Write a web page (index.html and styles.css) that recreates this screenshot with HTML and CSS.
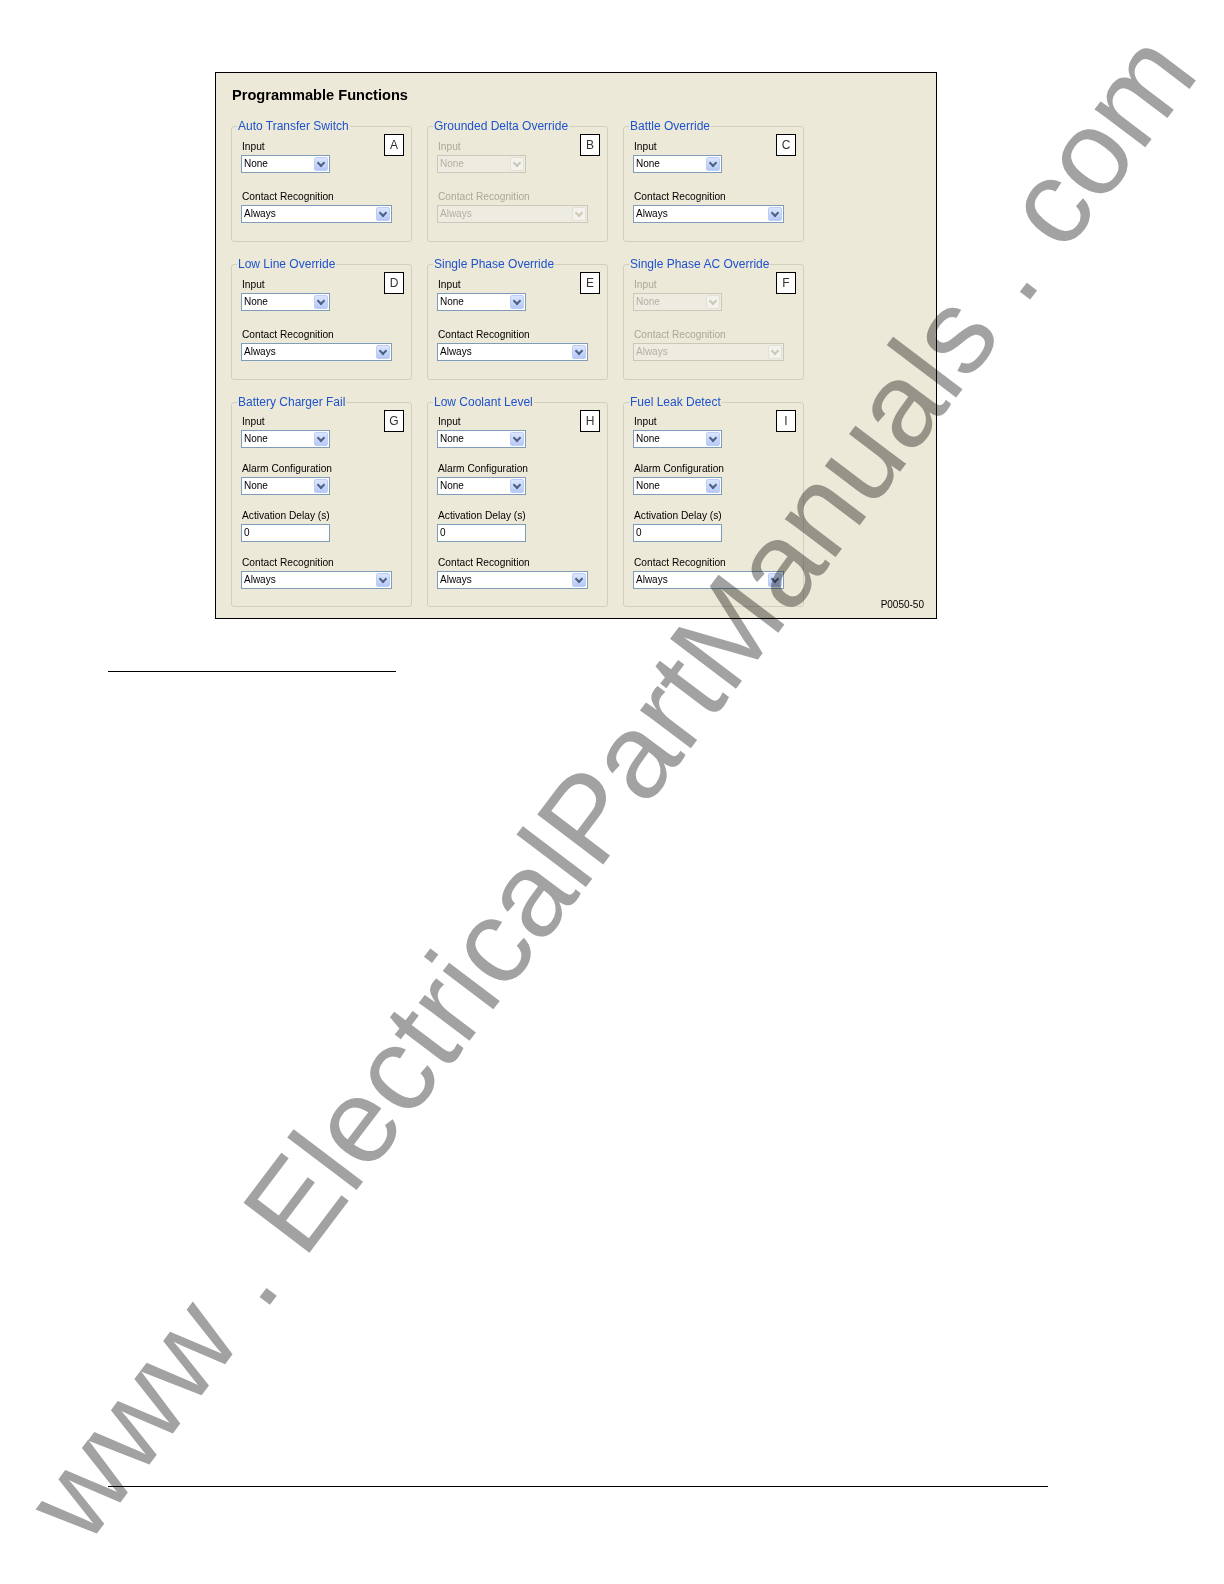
FILE: index.html
```html
<!DOCTYPE html>
<html lang="en">
<head>
<meta charset="utf-8">
<title>Programmable Functions</title>
<link rel="stylesheet" href="styles.css">
</head>
<body>
<div class="page">
  <div class="panel">
    <h1 class="panel-title">Programmable Functions</h1>
    <div class="groups">

      <fieldset class="group">
        <legend>Auto Transfer Switch</legend>
        <div class="gbody">
          <div class="fields">
            <div class="field">
              <div class="label">Input</div>
              <div class="combo short"><span class="val">None</span><span class="btn"></span></div>
            </div>
            <div class="field">
              <div class="label">Contact Recognition</div>
              <div class="combo long"><span class="val">Always</span><span class="btn"></span></div>
            </div>
          </div>
          <div class="letter">A</div>
        </div>
      </fieldset>

      <fieldset class="group off">
        <legend>Grounded Delta Override</legend>
        <div class="gbody">
          <div class="fields">
            <div class="field">
              <div class="label">Input</div>
              <div class="combo short"><span class="val">None</span><span class="btn"></span></div>
            </div>
            <div class="field">
              <div class="label">Contact Recognition</div>
              <div class="combo long"><span class="val">Always</span><span class="btn"></span></div>
            </div>
          </div>
          <div class="letter">B</div>
        </div>
      </fieldset>

      <fieldset class="group">
        <legend>Battle Override</legend>
        <div class="gbody">
          <div class="fields">
            <div class="field">
              <div class="label">Input</div>
              <div class="combo short"><span class="val">None</span><span class="btn"></span></div>
            </div>
            <div class="field">
              <div class="label">Contact Recognition</div>
              <div class="combo long"><span class="val">Always</span><span class="btn"></span></div>
            </div>
          </div>
          <div class="letter">C</div>
        </div>
      </fieldset>

      <fieldset class="group">
        <legend>Low Line Override</legend>
        <div class="gbody">
          <div class="fields">
            <div class="field">
              <div class="label">Input</div>
              <div class="combo short"><span class="val">None</span><span class="btn"></span></div>
            </div>
            <div class="field">
              <div class="label">Contact Recognition</div>
              <div class="combo long"><span class="val">Always</span><span class="btn"></span></div>
            </div>
          </div>
          <div class="letter">D</div>
        </div>
      </fieldset>

      <fieldset class="group">
        <legend>Single Phase Override</legend>
        <div class="gbody">
          <div class="fields">
            <div class="field">
              <div class="label">Input</div>
              <div class="combo short"><span class="val">None</span><span class="btn"></span></div>
            </div>
            <div class="field">
              <div class="label">Contact Recognition</div>
              <div class="combo long"><span class="val">Always</span><span class="btn"></span></div>
            </div>
          </div>
          <div class="letter">E</div>
        </div>
      </fieldset>

      <fieldset class="group off">
        <legend>Single Phase AC Override</legend>
        <div class="gbody">
          <div class="fields">
            <div class="field">
              <div class="label">Input</div>
              <div class="combo short"><span class="val">None</span><span class="btn"></span></div>
            </div>
            <div class="field">
              <div class="label">Contact Recognition</div>
              <div class="combo long"><span class="val">Always</span><span class="btn"></span></div>
            </div>
          </div>
          <div class="letter">F</div>
        </div>
      </fieldset>

      <fieldset class="group tall">
        <legend>Battery Charger Fail</legend>
        <div class="gbody">
          <div class="fields">
            <div class="field">
              <div class="label">Input</div>
              <div class="combo short"><span class="val">None</span><span class="btn"></span></div>
            </div>
            <div class="field">
              <div class="label">Alarm Configuration</div>
              <div class="combo short"><span class="val">None</span><span class="btn"></span></div>
            </div>
            <div class="field">
              <div class="label">Activation Delay (s)</div>
              <div class="textbox">0</div>
            </div>
            <div class="field">
              <div class="label">Contact Recognition</div>
              <div class="combo long"><span class="val">Always</span><span class="btn"></span></div>
            </div>
          </div>
          <div class="letter">G</div>
        </div>
      </fieldset>

      <fieldset class="group tall">
        <legend>Low Coolant Level</legend>
        <div class="gbody">
          <div class="fields">
            <div class="field">
              <div class="label">Input</div>
              <div class="combo short"><span class="val">None</span><span class="btn"></span></div>
            </div>
            <div class="field">
              <div class="label">Alarm Configuration</div>
              <div class="combo short"><span class="val">None</span><span class="btn"></span></div>
            </div>
            <div class="field">
              <div class="label">Activation Delay (s)</div>
              <div class="textbox">0</div>
            </div>
            <div class="field">
              <div class="label">Contact Recognition</div>
              <div class="combo long"><span class="val">Always</span><span class="btn"></span></div>
            </div>
          </div>
          <div class="letter">H</div>
        </div>
      </fieldset>

      <fieldset class="group tall">
        <legend>Fuel Leak Detect</legend>
        <div class="gbody">
          <div class="fields">
            <div class="field">
              <div class="label">Input</div>
              <div class="combo short"><span class="val">None</span><span class="btn"></span></div>
            </div>
            <div class="field">
              <div class="label">Alarm Configuration</div>
              <div class="combo short"><span class="val">None</span><span class="btn"></span></div>
            </div>
            <div class="field">
              <div class="label">Activation Delay (s)</div>
              <div class="textbox">0</div>
            </div>
            <div class="field">
              <div class="label">Contact Recognition</div>
              <div class="combo long"><span class="val">Always</span><span class="btn"></span></div>
            </div>
          </div>
          <div class="letter">I</div>
        </div>
      </fieldset>

      <div class="figid">P0050-50</div>
    </div>
  </div>

  <div class="rule-short"></div>
  <div class="rule-bottom"></div>

  <div class="watermark">www . ElectricalPartManuals . com</div>
</div>
</body>
</html>
```

FILE: styles.css
```css
* {
  box-sizing: border-box;
}

html,
body {
  margin: 0;
  padding: 0;
  background: #ffffff;
}

body {
  font-family: "Liberation Sans", Arial, sans-serif;
  color: #000000;
}

.page {
  position: relative;
  width: 1224px;
  height: 1584px;
  padding: 72px 0 0 108px;
  display: flex;
  flex-direction: column;
  align-items: flex-start;
  overflow: hidden;
}

/* ---------- dialog panel ---------- */
.panel {
  margin-left: 107px;
  width: 722px;
  background: #ECE9D8;
  border: 1px solid #000000;
  padding: 13px 12px 11px 15px;
}

.panel-title {
  margin: 0 0 15px 1px;
  font-size: 14.6px;
  line-height: 18px;
  font-weight: bold;
  color: #000000;
}

.groups {
  display: grid;
  grid-template-columns: 181px 181px 181px 1fr;
  column-gap: 15px;
  row-gap: 15px;
  align-items: start;
}

.groups > fieldset:nth-of-type(3n+1) {
  grid-column: 1;
}

.groups > fieldset:nth-of-type(3n+2) {
  grid-column: 2;
}

.groups > fieldset:nth-of-type(3n) {
  grid-column: 3;
}

/* ---------- group boxes ---------- */
.group {
  margin: 0;
  padding: 0;
  min-width: 0;
  border: 1px solid #D0D0BF;
  border-radius: 3px;
}

.group legend {
  margin-left: 5px;
  padding: 0 1px;
  font-size: 12px;
  line-height: 14px;
  color: #1F52CC;
  white-space: nowrap;
}

.gbody {
  display: grid;
  grid-template-columns: 1fr;
  padding: 0 7px 18px 9px;
}

.gbody > .fields,
.gbody > .letter {
  grid-row: 1;
  grid-column: 1;
}

.group.tall .gbody {
  padding-bottom: 17px;
}

.fields {
  padding-top: 7px;
}

.group.tall .fields {
  padding-top: 6px;
}

.field + .field {
  margin-top: 17px;
}

.group.tall .field + .field {
  margin-top: 14px;
}

.label {
  height: 13px;
  margin-bottom: 2px;
  padding-left: 1px;
  font-size: 10.2px;
  line-height: 13px;
  white-space: nowrap;
  color: #000000;
}

/* ---------- combo boxes ---------- */
.combo {
  display: flex;
  height: 18px;
  border: 1px solid #7F9DB9;
  background: #ffffff;
}

.combo.short {
  width: 89px;
}

.combo.long {
  width: 151px;
}

.val {
  flex: 1;
  padding-left: 2px;
  font-size: 10px;
  line-height: 16px;
  white-space: nowrap;
  color: #000000;
}

.btn {
  flex-shrink: 0;
  width: 14px;
  margin: 1px 1px 1px 0;
  border: 1px solid #BCCDF7;
  border-radius: 2px;
  background: linear-gradient(#DCE6FD, #B6C9F5);
  display: flex;
  align-items: center;
  justify-content: center;
}

.btn::after {
  content: "";
  width: 4px;
  height: 4px;
  margin-top: -3px;
  border-right: 2px solid #4D6185;
  border-bottom: 2px solid #4D6185;
  transform: rotate(45deg);
}

.textbox {
  width: 89px;
  height: 18px;
  border: 1px solid #7F9DB9;
  background: #ffffff;
  padding-left: 2px;
  font-size: 10px;
  line-height: 16px;
}

/* ---------- disabled groups ---------- */
.group.off .label {
  color: #ACA899;
}

.group.off .combo {
  border-color: #CBC8B9;
  background: #EEECE1;
}

.group.off .val {
  color: #B4B09F;
}

.group.off .btn {
  border-color: #E4E2D6;
  background: #F3F2EC;
}

.group.off .btn::after {
  border-color: #CBC8B9;
}

/* ---------- letter tags ---------- */
.letter {
  justify-self: end;
  align-self: start;
  width: 20px;
  height: 22px;
  margin-top: 1px;
  border: 1px solid #000000;
  background: #ffffff;
  font-size: 12px;
  line-height: 20px;
  text-align: center;
  color: #333333;
}

.figid {
  grid-column: 4;
  grid-row: 3;
  justify-self: end;
  align-self: end;
  margin-bottom: -4px;
  font-size: 10px;
  line-height: 12px;
  color: #000000;
}

/* ---------- document rules ---------- */
.rule-short {
  width: 288px;
  height: 1px;
  margin-top: 52px;
  background: #000000;
}

.rule-bottom {
  width: 940px;
  height: 1px;
  margin-top: auto;
  margin-bottom: 97px;
  background: #000000;
}

/* ---------- watermark ---------- */
.watermark {
  position: absolute;
  left: 5px;
  top: 1486px;
  font-family: "Liberation Sans", Arial, sans-serif;
  font-size: 120px;
  line-height: 120px;
  white-space: nowrap;
  color: #A2A2A2;
  mix-blend-mode: multiply;
  transform-origin: 0 0;
  transform: rotate(-52.9deg);
  pointer-events: none;
}
```
